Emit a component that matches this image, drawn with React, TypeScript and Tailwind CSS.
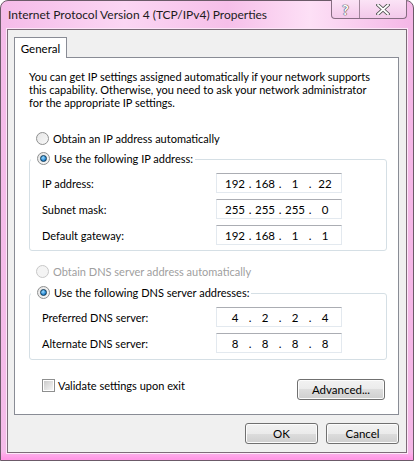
import React from "react";

const FONT = "font-['Lato','Liberation_Sans',sans-serif]";

const Radio = ({ checked = false, disabled = false }: { checked?: boolean; disabled?: boolean }) => (
  <span
    className={`relative inline-flex h-[13px] w-[13px] shrink-0 items-center justify-center rounded-full border ${
      disabled ? "border-[#c8c8c8] bg-[#f4f4f4]" : "border-[#8e8f8f] bg-linear-to-br from-[#e6e6e6] to-[#f8f8f8]"
    }`}
  >
    {checked && (
      <span className="h-[7px] w-[7px] rounded-full border border-[#0d3a58] bg-[radial-gradient(circle_at_40%_35%,#9fdcff_0%,#2a8ad4_60%,#0e4f8a_100%)]" />
    )}
  </span>
);

const Checkbox = () => (
  <span className="inline-flex h-[13px] w-[13px] shrink-0 items-center justify-center border border-[#8e8f8f] bg-white">
    <span className="h-[9px] w-[9px] bg-linear-to-br from-[#cbcbcb] to-[#f6f6f6]" />
  </span>
);

const IpField = ({ parts }: { parts: string[] }) => (
  <div className="flex h-[20px] w-[126px] items-center border border-[#e3e9ef] border-t-[#abadb3] bg-white pl-[7px] text-[11.5px]">
    {parts.map((p, i) => (
      <React.Fragment key={i}>
        <span className="w-[22px] text-center">{p}</span>
        {i < 3 && <span className="w-[8px] text-center">.</span>}
      </React.Fragment>
    ))}
  </div>
);

const FieldRow = ({ label, parts }: { label: string; parts: string[] }) => (
  <div className="flex items-center justify-between pl-[12px] pr-[44px]">
    <span>{label}</span>
    <IpField parts={parts} />
  </div>
);

const WinButton = ({ label, width }: { label: string; width: string }) => (
  <button
    className={`${width} flex h-[21px] items-center justify-center rounded-[3px] border border-[#707070] bg-[linear-gradient(#f2f2f2_0%,#ebebeb_50%,#dddddd_50%,#cfcfcf_100%)] text-[11.5px] text-black shadow-[inset_0_0_0_1px_#fcfcfc]`}
  >
    {label}
  </button>
);

export default function App() {
  return (
    <div className={`${FONT} h-[461px] w-[414px] bg-white text-[11px] leading-[13px] text-black`}>
      <div className="flex h-[461px] w-[414px] flex-col rounded-t-[8px] border border-[#6b5a68] bg-[linear-gradient(180deg,transparent_451px,#fdb0ea_452px,#ff97e4_458px),linear-gradient(90deg,#f5bbe9_0%,#fbd6f3_30%,#f6bfe9_55%,#fde0f6_75%,#f4b6e6_100%)]">
        {/* Title bar */}
        <div className="flex h-[28px] shrink-0 items-start justify-between">
          <span className="pl-[7px] pt-[7px] text-[12px] text-[#1c1c1c]">
            Internet Protocol Version 4 (TCP/IPv4) Properties
          </span>
          <div className="mr-[6px] flex h-[19px] -mt-px overflow-hidden rounded-b-[4px] border border-t-0 border-[#866d82] bg-[linear-gradient(#fbe3f6,#f3c9ea)]">
            <span className="flex w-[28px] items-center justify-center border-r border-[#9c8598] text-[14px] font-bold text-white [text-shadow:0_0_1px_#444,0_0_1px_#444,0_0_1px_#444]">
              ?
            </span>
            <span className="flex w-[46px] items-center justify-center">
              <svg width="14" height="11" viewBox="0 0 14 11">
                <path d="M2 1 L12 10 M12 1 L2 10" stroke="#555" strokeWidth="3.6" strokeLinecap="square" />
                <path d="M2 1 L12 10 M12 1 L2 10" stroke="#fff" strokeWidth="1.8" strokeLinecap="square" />
              </svg>
            </span>
          </div>
        </div>

        {/* Client area */}
        <div className="mx-[6px] mb-[7px] flex flex-1 flex-col border border-[#7d6b79] bg-[#f0f0f0] pl-[6px] pr-[7px] pt-[7px] shadow-[0_0_0_1px_#fde6f8]">
          {/* Tab */}
          <div className="flex">
            <div className="relative z-10 -mb-px flex h-[21px] w-[53px] items-center justify-center border border-b-0 border-[#898c95] bg-white text-[11.5px]">
              General
            </div>
          </div>

          {/* Tab panel */}
          <div className="flex flex-col border border-[#898c95] bg-white pb-[14px] pl-[14px] pr-[11px] pt-[12px]">
            <p>
              You can get IP settings assigned automatically if your network supports
              <br />
              this capability. Otherwise, you need to ask your network administrator
              <br />
              for the appropriate IP settings.
            </p>

            <div className="ml-[7px] mt-[23px] flex items-center gap-[4px]">
              <Radio />
              <span>Obtain an IP address automatically</span>
            </div>

            <div className="mt-[14px] flex flex-col rounded-[3px] border border-[#d5dfe5] pb-[5px]">
              <div className="-mt-[8px] ml-px flex items-center gap-[4px] self-start bg-white pl-[6px] pr-[2px]">
                <Radio checked />
                <span>Use the following IP address:</span>
              </div>
              <div className="mt-[8px] flex flex-col gap-[6px]">
                <FieldRow label="IP address:" parts={["192", "168", "1", "22"]} />
                <FieldRow label="Subnet mask:" parts={["255", "255", "255", "0"]} />
                <FieldRow label="Default gateway:" parts={["192", "168", "1", "1"]} />
              </div>
            </div>

            <div className="ml-[7px] mt-[14px] flex items-center gap-[4px] text-[#a0a0a0]">
              <Radio disabled />
              <span>Obtain DNS server address automatically</span>
            </div>

            <div className="mt-[15px] flex flex-col rounded-[3px] border border-[#d5dfe5] pb-[6px]">
              <div className="-mt-[8px] ml-px flex items-center gap-[4px] self-start bg-white pl-[6px] pr-[2px]">
                <Radio checked />
                <span>Use the following DNS server addresses:</span>
              </div>
              <div className="mt-[8px] flex flex-col gap-[6px]">
                <FieldRow label="Preferred DNS server:" parts={["4", "2", "2", "4"]} />
                <FieldRow label="Alternate DNS server:" parts={["8", "8", "8", "8"]} />
              </div>
            </div>

            <div className="mt-[19px] flex items-start justify-between pl-[13px] pr-[2px]">
              <div className="flex items-center gap-[3px]">
                <Checkbox />
                <span>Validate settings upon exit</span>
              </div>
              <WinButton label="Advanced..." width="w-[88px]" />
            </div>
          </div>

          {/* Dialog buttons */}
          <div className="mt-[8px] flex justify-end gap-[8px]">
            <WinButton label="OK" width="w-[73px]" />
            <WinButton label="Cancel" width="w-[73px]" />
          </div>
        </div>
      </div>
    </div>
  );
}
